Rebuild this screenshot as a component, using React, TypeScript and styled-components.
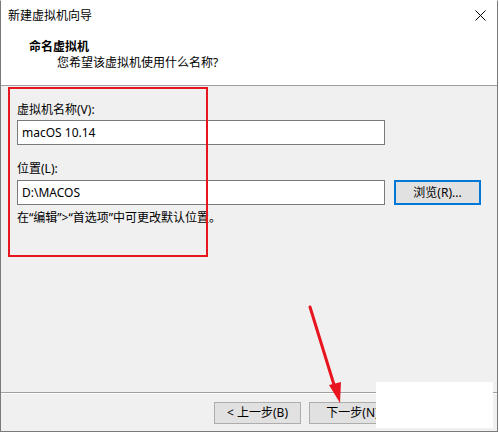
import styled, { createGlobalStyle } from 'styled-components';

const GlobalStyle = createGlobalStyle`
  html, body {
    margin: 0;
    padding: 0;
    background: #ffffff;
  }
  body {
    font-family: "Noto Sans", "Noto Sans CJK SC", sans-serif;
    font-size: 12px;
    color: #000000;
  }
`;

const Window = styled.div`
  position: relative;
  width: 496px;
  height: 430px;
  border-left: 1px solid #7a7a7a;
  border-right: 1px solid #7a7a7a;
  border-bottom: 1px solid #7a7a7a;
  border-top: 1px solid #ffffff;
  background: #f0f0f0;
  display: flex;
  flex-direction: column;
  overflow: hidden;
`;

const TitleBar = styled.div`
  height: 29px;
  background: #ffffff;
  display: flex;
  align-items: center;
  justify-content: space-between;
  padding: 0 8px 0 7px;
`;

const TitleText = styled.span`
  font-size: 12px;
  line-height: 16px;
`;

const CloseIcon = styled.svg`
  width: 11px;
  height: 11px;
  margin-right: 3px;
`;

const Header = styled.div`
  background: #ffffff;
  height: 56px;
  border-bottom: 1px solid #a0a0a0;
  padding-top: 9px;
  box-sizing: border-box;
`;

const HeaderTitle = styled.div`
  font-weight: bold;
  line-height: 16px;
  padding-left: 28px;
`;

const HeaderSub = styled.div`
  line-height: 16px;
  padding-left: 56px;
`;

const Body = styled.div`
  flex: 1;
  padding: 16px 0 0 16px;
  display: flex;
  flex-direction: column;
`;

const Label = styled.div<{ $top?: number }>`
  line-height: 16px;
  margin-top: ${(p) => p.$top ?? 0}px;
`;

const Row = styled.div<{ $top?: number }>`
  display: flex;
  gap: 9px;
  margin-top: ${(p) => p.$top ?? 0}px;
`;

const TextInput = styled.div`
  width: 362px;
  height: 23px;
  border: 1px solid #7a7a7a;
  background: #ffffff;
  display: flex;
  align-items: center;
  padding-left: 4px;
  box-sizing: content-box;
`;

const Button = styled.div<{ $focused?: boolean; $width?: number }>`
  width: ${(p) => p.$width ?? 86}px;
  box-sizing: border-box;
  background: #e1e1e1;
  border: ${(p) => (p.$focused ? '2px solid #0078d7' : '1px solid #adadad')};
  display: flex;
  align-items: center;
  justify-content: center;
  line-height: 16px;
`;

const Hint = styled.div`
  line-height: 16px;
  margin-top: 5px;
`;

const Footer = styled.div`
  height: 39px;
  border-top: 1px solid #a0a0a0;
  box-shadow: inset 0 1px 0 #ffffff;
  display: flex;
  gap: 8px;
  padding: 9px 0 0 213px;
  box-sizing: border-box;
`;

const FooterButton = styled(Button)`
  height: 22px;
`;

const Highlight = styled.div`
  position: absolute;
  left: 7px;
  top: 86px;
  width: 196px;
  height: 166px;
  border: 2px solid #e8141e;
  pointer-events: none;
`;

const Mask = styled.div`
  position: absolute;
  left: 375px;
  top: 381px;
  width: 117px;
  height: 46px;
  background: #ffffff;
`;

const Arrow = styled.svg`
  position: absolute;
  left: 0;
  top: 0;
  width: 499px;
  height: 433px;
  pointer-events: none;
`;

export default function App() {
  return (
    <>
      <GlobalStyle />
      <Window>
        <TitleBar>
          <TitleText>新建虚拟机向导</TitleText>
          <CloseIcon viewBox="0 0 11 11">
            <path d="M0.5 0.5 L10.5 10.5 M10.5 0.5 L0.5 10.5" stroke="#000" strokeWidth="1" fill="none" />
          </CloseIcon>
        </TitleBar>
        <Header>
          <HeaderTitle>命名虚拟机</HeaderTitle>
          <HeaderSub>您希望该虚拟机使用什么名称?</HeaderSub>
        </Header>
        <Body>
          <Label>虚拟机名称(V):</Label>
          <Row $top={2}>
            <TextInput>macOS 10.14</TextInput>
          </Row>
          <Label $top={16}>位置(L):</Label>
          <Row $top={3}>
            <TextInput>D:\MACOS</TextInput>
            <Button $focused $width={87}>浏览(R)...</Button>
          </Row>
          <Hint>在“编辑”&gt;“首选项”中可更改默认位置。</Hint>
        </Body>
        <Footer>
          <FooterButton $width={87}>&lt; 上一步(B)</FooterButton>
          <FooterButton $width={87}>下一步(N)</FooterButton>
          <FooterButton $width={87}>取消</FooterButton>
        </Footer>
        <Highlight />
        <Mask />
      </Window>
      <Arrow viewBox="0 0 499 433">
        <line x1="310" y1="307" x2="335" y2="388" stroke="#e8141e" strokeWidth="3" strokeLinecap="round" />
        <polygon points="340,403 329,385 341,382" fill="#e8141e" />
      </Arrow>
    </>
  );
}
